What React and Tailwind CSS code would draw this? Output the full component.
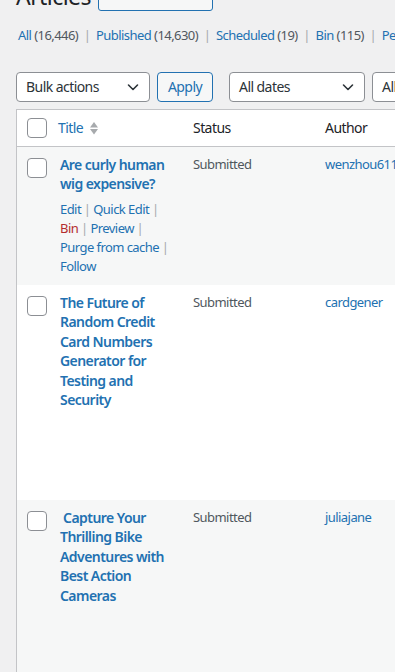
import React from 'react'

const views = [
  { label: 'All', count: '16,446' },
  { label: 'Published', count: '14,630' },
  { label: 'Scheduled', count: '19' },
  { label: 'Bin', count: '115' },
  { label: 'Pending', count: '2,041' },
]

const posts = [
  {
    title: 'Are curly human wig expensive?',
    author: 'wenzhou611',
    actions: true,
    rowClass: 'h-[138px] bg-[#f6f7f7]',
  },
  {
    title: 'The Future of Random Credit Card Numbers Generator for Testing and Security',
    author: 'cardgener',
    rowClass: 'h-[215px] bg-white',
  },
  {
    title: '\u00a0Capture Your Thrilling Bike Adventures with Best Action Cameras',
    author: 'juliajane',
    rowClass: 'h-[215px] bg-[#f6f7f7]',
  },
]

const actions = [
  { label: 'Edit' },
  { label: 'Quick Edit' },
  { label: 'Bin', danger: true },
  { label: 'Preview' },
  { label: 'Purge from cache' },
  { label: 'Follow', last: true },
]

const Chevron = () => (
  <svg width="20" height="20" viewBox="0 0 20 20" fill="none" className="shrink-0">
    <path d="M5.5 8l4.5 4.5L14.5 8" stroke="#2c3338" strokeWidth="1.6" strokeLinecap="round" strokeLinejoin="round" />
  </svg>
)

const Select = ({ label, width }) => (
  <div className={`flex h-[30px] shrink-0 items-center justify-between rounded border border-[#8c8f94] bg-white pl-[9px] pr-[6px] text-[14px] text-[#2c3338] ${width}`}>
    <span>{label}</span>
    <Chevron />
  </div>
)

const Checkbox = () => (
  <div className="h-[20px] w-[20px] rounded-[4px] border border-[#8c8f94] bg-white" />
)

const SortArrows = () => (
  <svg width="10" height="16" viewBox="0 0 10 16" className="ml-[6px]">
    <path d="M1 7.5L5 2l4 5.5z" fill="#a7aaad" />
    <path d="M1 9L5 14.5 9 9z" fill="#a7aaad" />
  </svg>
)

const Row = ({ post }) => (
  <div className={`grid grid-cols-[33px_133px_132px_1fr] ${post.rowClass}`}>
    <div className="pl-[10px] pt-[11px]">
      <Checkbox />
    </div>
    <div className="px-[10px] pt-[8px]">
      <div className="text-[14px] font-semibold leading-[19.5px] text-[#2271b1]">{post.title}</div>
      {post.actions && (
        <div className="mt-[6px] flex flex-wrap text-[13px] leading-[19px]">
          {actions.map((a) => (
            <span key={a.label} className="whitespace-nowrap">
              <span className={a.danger ? 'text-[#b32d2e]' : 'text-[#2271b1]'}>{a.label}</span>
              {!a.last && <span className="text-[#a7aaad]">&nbsp;|&nbsp;</span>}
            </span>
          ))}
        </div>
      )}
    </div>
    <div className="px-[10px] pt-[8px] text-[13px] leading-[19.5px] text-[#50575e]">Submitted</div>
    <div className="px-[10px] pt-[8px] text-[13px] leading-[19.5px] text-[#2271b1] whitespace-nowrap">{post.author}</div>
  </div>
)

export default function App() {
  return (
    <div className="h-[672px] w-full overflow-hidden bg-[#f0f0f1] font-['Noto_Sans',sans-serif] tracking-[-0.035em] text-[#3c434a]">
      <div className="w-[700px] pl-4">
        <div className="mt-[-19px] flex h-[30px] items-center">
          <h1 className="w-[82px] text-[23px] font-normal leading-[30px] text-[#1d2327]">Articles</h1>
          <div className="flex h-[30px] w-[115px] items-center justify-center rounded-[3px] border border-[#2271b1] bg-[#f6f7f7] text-[13px] text-[#2271b1]">
            Add New Article
          </div>
        </div>

        <div className="mt-[15px] flex whitespace-nowrap pl-[2px] text-[13px] leading-[19.5px]">
          {views.map((v, i) => (
            <span key={v.label}>
              <span className="text-[#2271b1]">{v.label} </span>
              <span className="text-[#50575e]">({v.count})</span>
              {i < views.length - 1 && <span className="text-[#a7aaad]">&nbsp;&nbsp;|&nbsp;&nbsp;</span>}
            </span>
          ))}
        </div>

        <div className="mt-[26px] flex items-center">
          <Select label="Bulk actions" width="w-[134px]" />
          <div className="ml-[7px] flex h-[30px] w-[56px] items-center justify-center rounded border border-[#2271b1] bg-[#f6f7f7] text-[14px] text-[#2271b1]">
            Apply
          </div>
          <div className="ml-[16px]">
            <Select label="All dates" width="w-[136px]" />
          </div>
          <div className="ml-[7px]">
            <Select label="All Categories" width="w-[160px]" />
          </div>
        </div>

        <div className="mt-[7px] w-[660px] border border-[#c3c4c7] bg-white">
          <div className="grid h-[37px] grid-cols-[33px_133px_132px_1fr] items-center border-b border-[#c3c4c7] text-[14px]">
            <div className="pl-[10px]">
              <Checkbox />
            </div>
            <div className="flex items-center pl-[8px] text-[#2271b1]">
              Title
              <SortArrows />
            </div>
            <div className="pl-[10px] text-[#1d2327]">Status</div>
            <div className="pl-[10px] text-[#1d2327]">Author</div>
          </div>
          {posts.map((p) => (
            <Row key={p.author} post={p} />
          ))}
        </div>
      </div>
    </div>
  )
}
